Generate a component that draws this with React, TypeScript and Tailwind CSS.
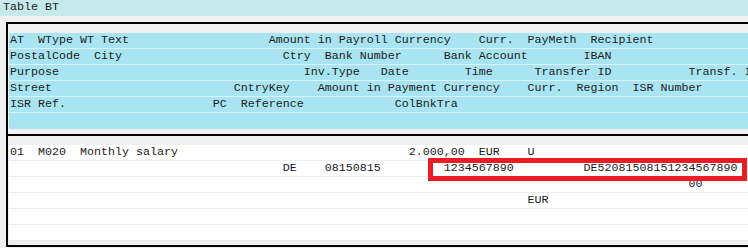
const CH = 7;

type Cell = [number, string];

// builds a fixed-column text line (SAP list style, 7px per char)
function cols(cells: Cell[]) {
  let s = "";
  for (const [c, t] of cells) {
    if (s.length < c) s = s + " ".repeat(c - s.length);
    s = s + t;
  }
  return s;
}

const headerRows: Cell[][] = [
  [[0, "AT  WType WT Text"], [37, "Amount in Payroll Currency"], [67, "Curr."], [74, "PayMeth"], [83, "Recipient"]],
  [[0, "PostalCode  City"], [39, "Ctry"], [45, "Bank Number"], [62, "Bank Account"], [82, "IBAN"]],
  [[0, "Purpose"], [42, "Inv.Type"], [53, "Date"], [65, "Time"], [75, "Transfer ID"], [97, "Transf. ID"]],
  [[0, "Street"], [32, "CntryKey"], [44, "Amount in Payment Currency"], [74, "Curr."], [81, "Region"], [89, "ISR Number"]],
  [[0, "ISR Ref."], [29, "PC"], [33, "Reference"], [55, "ColBnkTra"]],
  [],
];

const dataRows: Cell[][] = [
  [[0, "01  M020  Monthly salary"], [57, "2.000,00"], [67, "EUR"], [74, "U"]],
  [[39, "DE"], [45, "08150815"], [62, "1234567890"], [82, "DE52081508151234567890"]],
  [[97, "00"]],
  [[74, "EUR"]],
  [],
  [],
];

const mono = "font-['Liberation_Mono','Courier_New',monospace] text-[11.67px] leading-[15px] text-[#1c1c1c] whitespace-pre";

export default function App() {
  return (
    <div className="w-[748px] h-[248px] bg-[#f0f0f0] overflow-hidden">
      <div className={`h-[16px] bg-[#c6eaeb] pl-[3px] ${mono}`}>Table BT</div>

      <div className="pl-[6px] pt-[6px]">
        <div className="border-2 border-r-0 border-black w-[800px] pl-[1px] pt-[9px] pb-[4px]">
          <div className="flex flex-col">
            {headerRows.map((r, i) => (
              <div key={i} className="h-[16px] border-b border-[#dcf3f9] bg-[#a8e4f2] pl-[1px] last:border-b-0">
                <div className={mono}>{cols(r)}</div>
              </div>
            ))}
          </div>

          <div className="h-[5px]" />
          <div className="-ml-[1px] h-[2px] bg-black" />
          <div className="h-[9px]" />

          <div className="relative flex flex-col">
            {dataRows.map((r, i) => (
              <div key={i} className="h-[16px] border-b border-[#ececec] bg-white pl-[1px]">
                <div className={mono}>{cols(r)}</div>
              </div>
            ))}
            <div className="absolute left-[419px] top-[13px] w-[319px] h-[23px] border-[5px] border-[#ec1c24]" />
          </div>
        </div>
      </div>
    </div>
  );
}
